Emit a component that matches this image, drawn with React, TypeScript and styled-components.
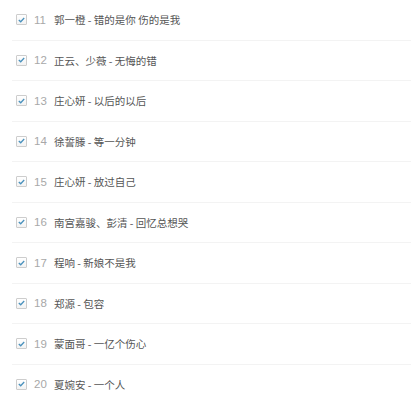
import React from "react";
import styled, { createGlobalStyle } from "styled-components";

const Global = createGlobalStyle`
  html, body { margin: 0; padding: 0; background: #ffffff; }
  body { font-family: "Noto Sans CJK SC", "Liberation Sans", sans-serif; }
`;

const List = styled.ul`
  list-style: none;
  margin: 0 0 0 12px;
  padding: 0;
  width: 399px;
`;

const Row = styled.li`
  display: flex;
  align-items: center;
  height: 39.5px;
  border-bottom: 1px solid #f3f3f3;
  padding-left: 4px;
  &:last-child { border-bottom: none; }
`;

const Box = styled.span`
  display: inline-flex;
  align-items: center;
  justify-content: center;
  width: 9px;
  height: 9px;
  border: 1px solid #cdcdcd;
  border-radius: 1px;
  background: linear-gradient(#ffffff, #f3f3f3);
  flex: none;
`;

const Num = styled.span`
  font-family: "Liberation Sans", Arial, sans-serif;
  font-size: 11.5px;
  color: #a8a8a8;
  margin-left: 7px;
  width: 20px;
  flex: none;
`;

const Title = styled.span`
  font-family: "Noto Sans CJK SC", sans-serif;
  font-size: 10.5px;
  color: #555555;
  white-space: pre;
`;

const Check = () => (
  <svg width="7" height="6" viewBox="0 0 7 6">
    <path d="M0.8 3 L2.7 4.8 L6.2 1" fill="none" stroke="#4a91bd" strokeWidth="1.3" />
  </svg>
);

const songs: [number, string][] = [
  [11, "郭一橙 - 错的是你 伤的是我"],
  [12, "正云、少薇 - 无悔的错"],
  [13, "庄心妍 - 以后的以后"],
  [14, "徐誓滕 - 等一分钟"],
  [15, "庄心妍 - 放过自己"],
  [16, "南宫嘉骏、彭清 - 回忆总想哭"],
  [17, "程响 - 新娘不是我"],
  [18, "郑源 - 包容"],
  [19, "蒙面哥 - 一亿个伤心"],
  [20, "夏婉安 - 一个人"],
];

export default function App() {
  return (
    <>
      <Global />
      <List>
        {songs.map(([n, t]) => (
          <Row key={n}>
            <Box>
              <Check />
            </Box>
            <Num>{n}</Num>
            <Title>{t}</Title>
          </Row>
        ))}
      </List>
    </>
  );
}
